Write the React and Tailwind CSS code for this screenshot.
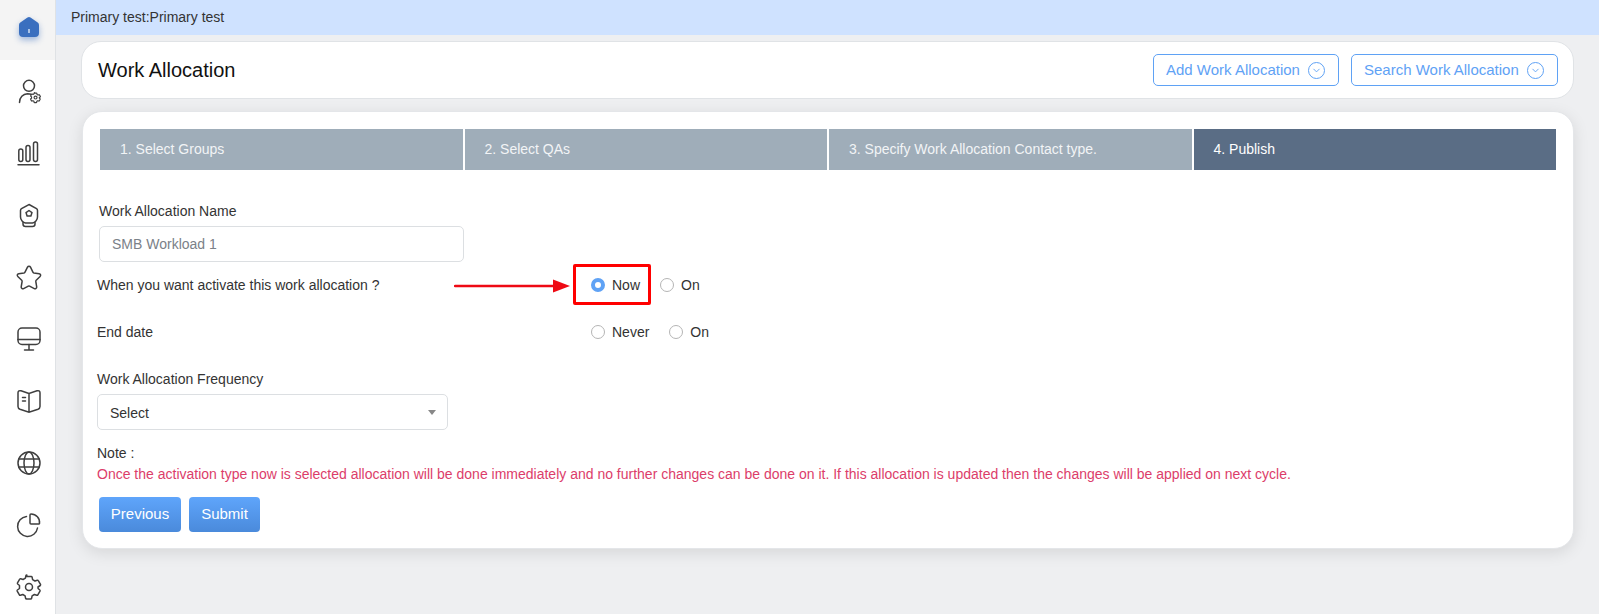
import { ChevronDown } from 'lucide-react';

const Radio = ({ checked, label, className = '' }) => (
    <label className={`flex items-center ${className}`}>
        {checked ? (
            <span className="w-[14px] h-[14px] rounded-full border-[4px] border-[#5fa2f5] bg-white mr-[7px]"></span>
        ) : (
            <span className="w-[14px] h-[14px] rounded-full border border-[#b5b5b5] bg-white mr-[7px]"></span>
        )}
        {label}
    </label>
);

const gearPath = 'M9.800 1.500h4.400c.5 0 .8.300.9.700l.5 2.500 2.300 1.300 2.400-.8c.4-.1.800 0 1 .4l2.200 3.800c.2.400.1.800-.2 1.100L21 12l.1 1.500 1.700 1.500c.3.300.4.700.2 1.100l-2.200 3.800c-.2.400-.6.500-1 .4l-2.400-.8-2.300 1.300-.5 2.500c-.1.400-.4.700-.9.700H9.500c-.5 0-.8-.3-.9-.7l-.5-2.500-2.300-1.300-2.400.8c-.4.100-.8 0-1-.4L.2 16.100c-.2-.4-.1-.8.2-1.100L2.500 13.500V10.500L.7 9c-.3-.3-.4-.7-.2-1.100l2.200-3.800c.2-.4.6-.5 1-.4l2.400.8 2.300-1.300.5-2.500c.1-.4.400-.7.900-.7z';

const icons = [
    // user with cog
    <g key="user">
        <circle cx="12" cy="6.800" r="5.500" />
        <path d="M2.500 23.500c0-5 3.500-8.500 8-8.700 1.500 0 2.500.1 3.500.5" />
        <g transform="translate(13.500 13.500) scale(0.42)" strokeWidth="2.800">
            <circle cx="12" cy="12" r="3.500" />
            <path d={gearPath} strokeLinejoin="round" />
        </g>
    </g>,
    // bars
    <g key="bars">
        <rect x="1.800" y="8" width="4" height="12.500" rx="2" />
        <rect x="9" y="4.500" width="4" height="16" rx="2" />
        <rect x="16.500" y="1" width="4" height="19.500" rx="2" />
        <path d="M1 23.800h21" />
    </g>,
    // badge
    <g key="badge">
        <path d="M12 1.500l7.500 4.200c.6.400 1 1 1 1.800v6.500c0 3-2.500 5.500-5 6h-7c-2.500-.5-5-3-5-6V7.500c0-.8.4-1.400 1-1.800z" />
        <path d="M12 7.500l3 2.100-1.100 3.400h-3.800L9 9.600z" strokeLinejoin="round" />
        <path d="M6 19.500v1.500c0 1.500 1 2.500 2.500 2.500h7c1.500 0 2.500-1 2.500-2.500v-1.500" />
    </g>,
    // star
    <path key="star" d="M10.500 2.200c.6-1.200 2.400-1.200 3 0l2.400 4.900c.2.400.6.700 1 .8l5.300.8c1.400.2 1.900 1.900.9 2.800l-3.900 3.800c-.3.300-.5.800-.4 1.200l.9 5.300c.2 1.400-1.200 2.400-2.400 1.800l-4.700-2.500c-.4-.2-.9-.2-1.300 0l-4.700 2.500c-1.200.6-2.600-.4-2.400-1.800l.9-5.300c.1-.4-.1-.9-.4-1.200L.8 11.500c-1-.9-.5-2.600.9-2.800L7 7.900c.4-.1.800-.4 1-.8z" strokeLinejoin="round" />,
    // monitor
    <g key="monitor">
        <rect x="1" y="1" width="22" height="16.500" rx="4" />
        <path d="M1 12.500h22M12 17.500V23M7.500 23h9" />
    </g>,
    // book
    <g key="book">
        <path d="M12 4.500L4 1.800C2.500 1.300 1 2 1 3.800v13.700c0 1.300.7 2.200 2 2.700l9 3 9-3c1.300-.5 2-1.400 2-2.700V3.800c0-1.800-1.500-2.500-3-2L12 4.500zM12 4.500v18.700" />
        <path d="M5.500 8.500h3M5.500 12h3" />
    </g>,
    // globe
    <g key="globe">
        <circle cx="12" cy="12" r="11" />
        <ellipse cx="12" cy="12" rx="5" ry="11" />
        <path d="M1.800 8h20.400M1.800 16h20.400" />
    </g>,
    // pie
    <g key="pie">
        <path d="M9.500 3.500a10 10 0 1 0 11 11.500" />
        <path d="M14 1a8.500 8.500 0 0 1 8.500 9.500c-.1.300-.3.500-.6.500H14c-.6 0-1-.4-1-1V2c0-.6.400-1 1-1z" strokeLinejoin="round" />
    </g>,
    // gear
    <g key="gear">
        <circle cx="12" cy="12" r="3.500" />
        <path d={gearPath} strokeLinejoin="round" />
    </g>,
];

const steps = ['1. Select Groups', '2. Select QAs', '3. Specify Work Allocation Contact type.', '4. Publish'];

const HeaderButton = ({ children, className = '' }) => (
    <button className={`h-[32px] rounded-[5px] border border-[#5fa2f5] text-[#5fa2f5] text-[15px] leading-[30px] flex items-center justify-between pl-[12px] pr-[13px] bg-white ${className}`}>
        <span>{children}</span>
        <span className="w-[17px] h-[17px] rounded-full border border-[#5fa2f5] flex items-center justify-center">
            <ChevronDown size={11} strokeWidth={2} />
        </span>
    </button>
);

export default function App() {
    return (
        <div className="flex w-[1599px] h-[614px] overflow-hidden bg-[#eeeff1] text-[14px] text-[#333333] font-['Liberation_Sans',Arial,sans-serif]">
            {/* Sidebar */}
            <aside className="w-[56px] shrink-0 bg-white border-r border-[#dfe2e5] flex flex-col items-center">
                <div className="w-full h-[60px] bg-[#f4f4f4] flex items-center justify-center pb-[7px] pl-[3px]">
                    <svg width="20" height="20" viewBox="0 0 20 20" className="drop-shadow-[0_3px_3px_rgba(49,105,189,0.45)]">
                        <path d="M8.500.6a2.500 2.500 0 0 1 3 0l7.200 5a3 3 0 0 1 1.300 2.400V16a4 4 0 0 1-4 4H4a4 4 0 0 1-4-4V8a3 3 0 0 1 1.300-2.400z" fill="#3a6fbf" />
                        <rect x="9.300" y="12" width="1.400" height="4" fill="#dbe7f7" />
                    </svg>
                </div>
                <div className="flex flex-col items-center gap-[38px] pt-[19px] pl-[3px]">
                    {icons.map((icon, i) => (
                        <svg key={i} width="24" height="24" viewBox="0 0 24 24" fill="none" stroke="#3f3f3f" strokeWidth="1.500" strokeLinecap="round" className="overflow-visible">
                            {icon}
                        </svg>
                    ))}
                </div>
            </aside>

            <main className="flex-1 min-w-0">
                <div className="h-[35px] bg-[#cfe2ff] pl-[15px] flex items-center text-[#333333]">Primary test:Primary test</div>

                {/* Title card */}
                <div className="ml-[25px] mr-[25px] mt-[6px] h-[58px] bg-white border border-[#e0e3e6] rounded-[20px] flex items-center justify-between pl-[16px] pr-[15px]">
                    <h1 className="text-[20px] text-[#111111]">Work Allocation</h1>
                    <div className="flex gap-[12px]">
                        <HeaderButton className="w-[186px]">Add Work Allocation</HeaderButton>
                        <HeaderButton className="w-[207px]">Search Work Allocation</HeaderButton>
                    </div>
                </div>

                {/* Wizard card */}
                <div className="relative ml-[26px] mr-[25px] mt-[12px] h-[438px] bg-white border border-[#e4e6e9] rounded-[20px] shadow-[0_4px_16px_rgba(0,0,0,0.1)] pt-[17px] pl-[17px] pr-[16px]">
                    <div className="flex gap-[2px] w-[1456px]">
                        {steps.map((step, i) => (
                            <div key={step} className={`flex-1 h-[41px] flex items-center pl-[20px] ${i === 3 ? 'bg-[#5a6d85] text-white' : 'bg-[#9fadb9] text-[#f2f4f6]'}`}>
                                {step}
                            </div>
                        ))}
                    </div>

                    <div className="pt-[33px] -ml-[1px]">
                        <div className="h-[16px] leading-[16px]">Work Allocation Name</div>
                        <div className="mt-[7px] w-[365px] h-[36px] rounded-[5px] border border-[#dcdfe2] flex items-center pl-[12px] text-[#7b8188]">SMB Workload 1</div>
                    </div>

                    <div className="flex items-center h-[16px] mt-[15px] -ml-[3px]">
                        <span className="w-[494px]">When you want activate this work allocation ?</span>
                        <Radio checked label="Now" />
                        <Radio label="On" className="ml-[20px]" />
                    </div>

                    <div className="flex items-center h-[16px] mt-[31px] -ml-[3px]">
                        <span className="w-[494px]">End date</span>
                        <Radio label="Never" />
                        <Radio label="On" className="ml-[20px]" />
                    </div>

                    <div className="-ml-[3px] mt-[31px]">
                        <div className="h-[16px] leading-[16px]">Work Allocation Frequency</div>
                        <div className="mt-[7px] w-[351px] h-[36px] rounded-[5px] border border-[#dcdfe2] flex items-center justify-between pl-[12px] pr-[11px]">
                            <span className="pt-[2px]">Select</span>
                            <span className="w-0 h-0 border-x-[4px] border-x-transparent border-t-[5px] border-t-[#888888]"></span>
                        </div>
                        <div className="mt-[15px] h-[16px] leading-[16px]">Note :</div>
                        <div className="mt-[5px] h-[16px] leading-[16px] text-[#dc3d6a] text-[14px] whitespace-nowrap">
                            Once the activation type now is selected allocation will be done immediately and no further changes can be done on it. If this allocation is updated then the changes will be applied on next cycle.
                        </div>
                    </div>

                    <div className="flex gap-[8px] mt-[15px] -ml-[1px]">
                        <button className="w-[82px] h-[35px] rounded-[4px] bg-gradient-to-b from-[#5fa5fb] to-[#4a8adb] text-white text-[15px]">Previous</button>
                        <button className="w-[71px] h-[35px] rounded-[4px] bg-gradient-to-b from-[#5fa5fb] to-[#4a8adb] text-white text-[15px]">Submit</button>
                    </div>

                    {/* Annotation over the form */}
                    <div className="absolute left-[490px] top-[152px] w-[78px] h-[41px] border-[3px] border-[#ff0000] rounded-[2px]"></div>
                    <svg className="absolute left-[371px] top-[166px]" width="118" height="16" viewBox="0 0 118 16">
                        <path d="M1 8h100" stroke="#ee0a14" strokeWidth="2.500" strokeLinecap="round" />
                        <path d="M99 1.500l17 6.500-17 6.500z" fill="#ee0a14" />
                    </svg>
                </div>
            </main>
        </div>
    );
}
